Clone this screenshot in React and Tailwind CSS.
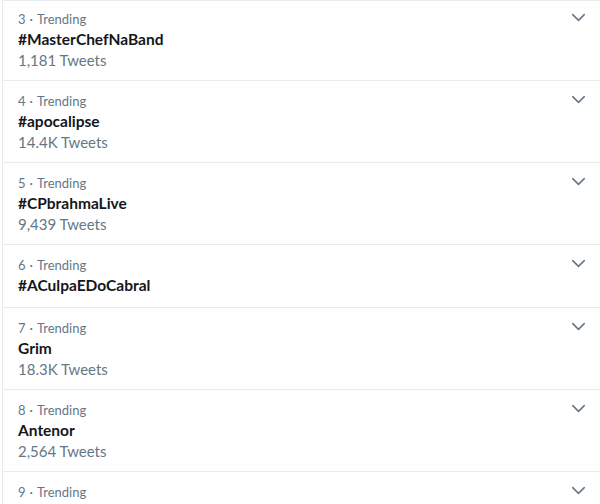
import { ChevronDown } from 'lucide-react';

const trends = [
  { rank: 3, name: '#MasterChefNaBand', tweets: '1,181 Tweets' },
  { rank: 4, name: '#apocalipse', tweets: '14.4K Tweets' },
  { rank: 5, name: '#CPbrahmaLive', tweets: '9,439 Tweets' },
  { rank: 6, name: '#ACulpaEDoCabral' },
  { rank: 7, name: 'Grim', tweets: '18.3K Tweets' },
  { rank: 8, name: 'Antenor', tweets: '2,564 Tweets' },
  { rank: 9, name: 'Next', tweets: '1,000 Tweets' },
];

function TrendRow({ rank, name, tweets, first }) {
  return (
    <div
      className={`relative border-b border-[#e6ecf0] px-[15px] ${first ? 'pt-[9px]' : 'pt-[11px]'} ${tweets ? 'pb-[10px]' : 'pb-[11px]'}`}
    >
      <div className="h-[19px] text-[13px] leading-[19px] text-[#657786]">
        {rank}
        <span className="mx-[4px]">·</span>
        Trending
      </div>
      {rank < 9 && (
        <>
          <div className="h-[21px] text-[15.5px] leading-[21px] font-bold text-[#14171a]">{name}</div>
          {tweets && <div className="h-[20px] text-[15px] leading-[20px] text-[#657786]">{tweets}</div>}
        </>
      )}
      <ChevronDown
        className={`absolute right-[10px] ${first ? 'top-[5px]' : 'top-[7px]'} text-[#657786]`}
        size={23}
        strokeWidth={1.6}
      />
    </div>
  );
}

export default function App() {
  return (
    <div className="h-[504px] w-[600px] overflow-hidden bg-white font-['Lato',sans-serif]">
      <div className="ml-[2px] border-l border-t border-[#e6ecf0]">
        {trends.map((t, i) => (
          <TrendRow key={t.rank} first={i === 0} {...t} />
        ))}
      </div>
    </div>
  );
}
